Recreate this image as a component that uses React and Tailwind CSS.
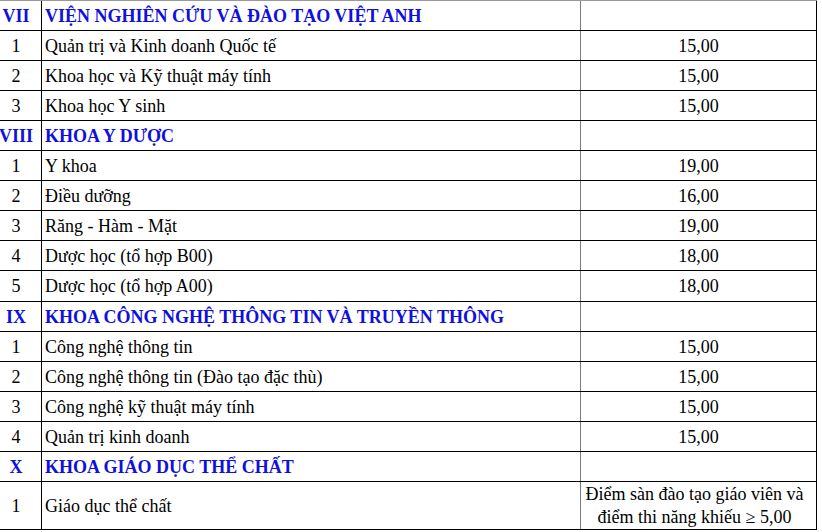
import React from "react";

const rows = [
  { h: true, n: "VII", t: "VIỆN NGHIÊN CỨU VÀ ĐÀO TẠO VIỆT ANH" },
  { n: "1", t: "Quản trị và Kinh doanh Quốc tế", v: "15,00" },
  { n: "2", t: "Khoa học và Kỹ thuật máy tính", v: "15,00" },
  { n: "3", t: "Khoa học Y sinh", v: "15,00" },
  { h: true, n: "VIII", t: "KHOA Y DƯỢC" },
  { n: "1", t: "Y khoa", v: "19,00" },
  { n: "2", t: "Điều dưỡng", v: "16,00" },
  { n: "3", t: "Răng - Hàm - Mặt", v: "19,00" },
  { n: "4", t: "Dược học (tổ hợp B00)", v: "18,00" },
  { n: "5", t: "Dược học (tổ hợp A00)", v: "18,00", tall: true },
  { h: true, n: "IX", t: "KHOA CÔNG NGHỆ THÔNG TIN VÀ TRUYỀN THÔNG" },
  { n: "1", t: "Công nghệ thông tin", v: "15,00" },
  { n: "2", t: "Công nghệ thông tin (Đào tạo đặc thù)", v: "15,00" },
  { n: "3", t: "Công nghệ kỹ thuật máy tính", v: "15,00" },
  { n: "4", t: "Quản trị kinh doanh", v: "15,00" },
  { h: true, n: "X", t: "KHOA GIÁO DỤC THỂ CHẤT" },
];

function Row({ r }) {
  return (
    <div className={`flex ${r.tall ? "h-[31px]" : "h-[30px]"} border-b border-black`}>
      <div
        className={`w-[42px] shrink-0 border-r border-black flex items-center justify-center pr-[9px] whitespace-nowrap ${
          r.h ? "font-bold text-[#1010dc]" : "text-black"
        }`}
      >
        {r.n}
      </div>
      <div
        className={`w-[539px] shrink-0 border-r border-[#7a7a7a] flex items-center pl-[3px] whitespace-nowrap ${
          r.h ? "font-bold text-[#1010dc]" : "text-black"
        }`}
      >
        {r.t}
      </div>
      <div className="w-[236px] shrink-0 border-r border-black flex items-center justify-center text-black">
        {r.v || ""}
      </div>
    </div>
  );
}

export default function App() {
  return (
    <div
      className="w-[822px] h-[532px] bg-white overflow-hidden text-[18px] leading-none"
      style={{ fontFamily: '"Liberation Serif", "Times New Roman", serif' }}
    >
      <div className="w-[817px] border-t border-[#9a9a9a]">
        {rows.map((r, i) => (
          <Row key={i} r={r} />
        ))}
        <div className="flex h-[48px] border-b border-black">
          <div className="w-[42px] shrink-0 border-r border-black flex items-center justify-center pr-[9px]">
            1
          </div>
          <div className="w-[539px] shrink-0 border-r border-[#7a7a7a] flex items-center pl-[3px]">
            Giáo dục thể chất
          </div>
          <div className="w-[236px] shrink-0 border-r border-black flex flex-col items-center justify-center leading-[23px] pr-[8px]">
            <span>Điểm sàn đào tạo giáo viên và</span>
            <span>điểm thi năng khiếu ≥ 5,00</span>
          </div>
        </div>
      </div>
    </div>
  );
}
